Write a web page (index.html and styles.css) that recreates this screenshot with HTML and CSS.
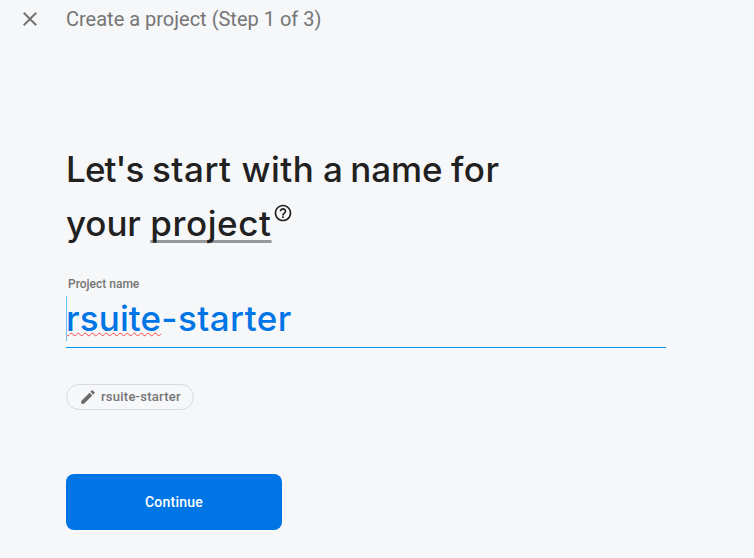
FILE: index.html
```html
<!DOCTYPE html>
<html lang="en">
<head>
<meta charset="utf-8">
<title>Create a project</title>
<link rel="stylesheet" href="styles.css">
</head>
<body>
<header class="topbar">
<svg class="close" viewBox="0 0 24 24"><path d="M19 6.41L17.59 5 12 10.59 6.41 5 5 6.41 10.59 12 5 17.59 6.41 19 12 13.41 17.59 19 19 17.59 13.41 12z"/></svg>
<span class="step">Create a project (Step 1 of 3)</span>
</header>
<main class="content">
<h1 class="title">Let's <span class="loose">start with</span> a <span class="normal">name</span> <span class="loose">for</span><br><span class="normal your">your</span> <span class="term">project</span><svg class="help" viewBox="0 0 24 24"><path d="M11 18h2v-2h-2v2zm1-16C6.480 2 2 6.480 2 12s4.480 10 10 10 10-4.480 10-10S17.520 2 12 2zm0 18c-4.410 0-8-3.590-8-8s3.590-8 8-8 8 3.590 8 8-3.590 8-8 8zm0-14c-2.210 0-4 1.790-4 4h2c0-1.100.9-2 2-2s2 .9 2 2c0 2-3 1.750-3 5h2c0-2.250 3-2.500 3-5 0-2.210-1.790-4-4-4z"/></svg></h1>
<div class="label">Project name</div>
<div class="field"><span class="value"><span class="misspelled">rsuite</span>-starter</span></div>
<div class="chip"><svg class="pencil" viewBox="0 0 24 24"><path d="M3 17.250V21h3.750L17.810 9.940l-3.750-3.750L3 17.250zM20.710 7.040a1 1 0 0 0 0-1.410l-2.340-2.340a1 1 0 0 0-1.410 0l-1.830 1.830 3.750 3.750 1.830-1.830z"/></svg><span>rsuite-starter</span></div>
<button class="continue">Continue</button>
</main>
</body>
</html>
```
FILE: styles.css
```css
* { box-sizing: border-box; }
body { margin: 0; background: #f6f7f9; font-family: Roboto, sans-serif; }
.topbar { display: flex; align-items: center; height: 38px; padding-left: 18px; }
.close { width: 24px; height: 24px; fill: #757575; }
.step { margin-left: 24px; font-size: 20px; color: #757575; white-space: nowrap; }
.content { padding: 104px 88px 0 66px; }
.title { margin: 0; height: 112px; font: 500 35px/54px Inter, sans-serif; letter-spacing: -0.9px; color: #212121; white-space: nowrap; }
.loose { letter-spacing: .55px; }
.normal { letter-spacing: -.1px; }
.your { margin-right: 1px; }
.term { letter-spacing: .6px; text-decoration: underline 3px #97989a; text-decoration-skip-ink: none; text-underline-offset: 4px; }
.help { width: 20px; height: 20px; fill: #212121; vertical-align: 13px; margin-left: 1px; }
.label { margin-left: 2px; margin-top: 22px; font-size: 12px; line-height: 16px; font-weight: 500; color: #757575; }
.field { position: relative; height: 52px; margin-top: 4px; border-bottom: 1px solid #039be5; font: 500 35px/45px Inter, sans-serif; letter-spacing: 0.45px; color: #0075e6; }
.field::before { content: ""; position: absolute; left: 0; top: 0; width: 1px; height: 45px; background: #68c2ee; }
.misspelled { letter-spacing: .15px; text-decoration: underline wavy #f44 1px; text-decoration-skip-ink: none; text-underline-offset: 1px; }
.chip { display: inline-flex; align-items: center; width: 128px; height: 26px; margin-top: 36px; padding-left: 12px; border: 1px solid #d8dadd; border-radius: 13px; font-size: 13px; line-height: 14px; letter-spacing: .25px; font-weight: 500; color: #757575; }
.chip span { margin-top: -1px; }
.pencil { width: 18px; height: 18px; margin-right: 4px; fill: #6b6b6b; }
.continue { display: block; width: 216px; height: 56px; margin-top: 64px; border: 0; border-radius: 8px; background: #0075e6; color: #fff; font: 500 14px Roboto, sans-serif; letter-spacing: .25px; }
```
